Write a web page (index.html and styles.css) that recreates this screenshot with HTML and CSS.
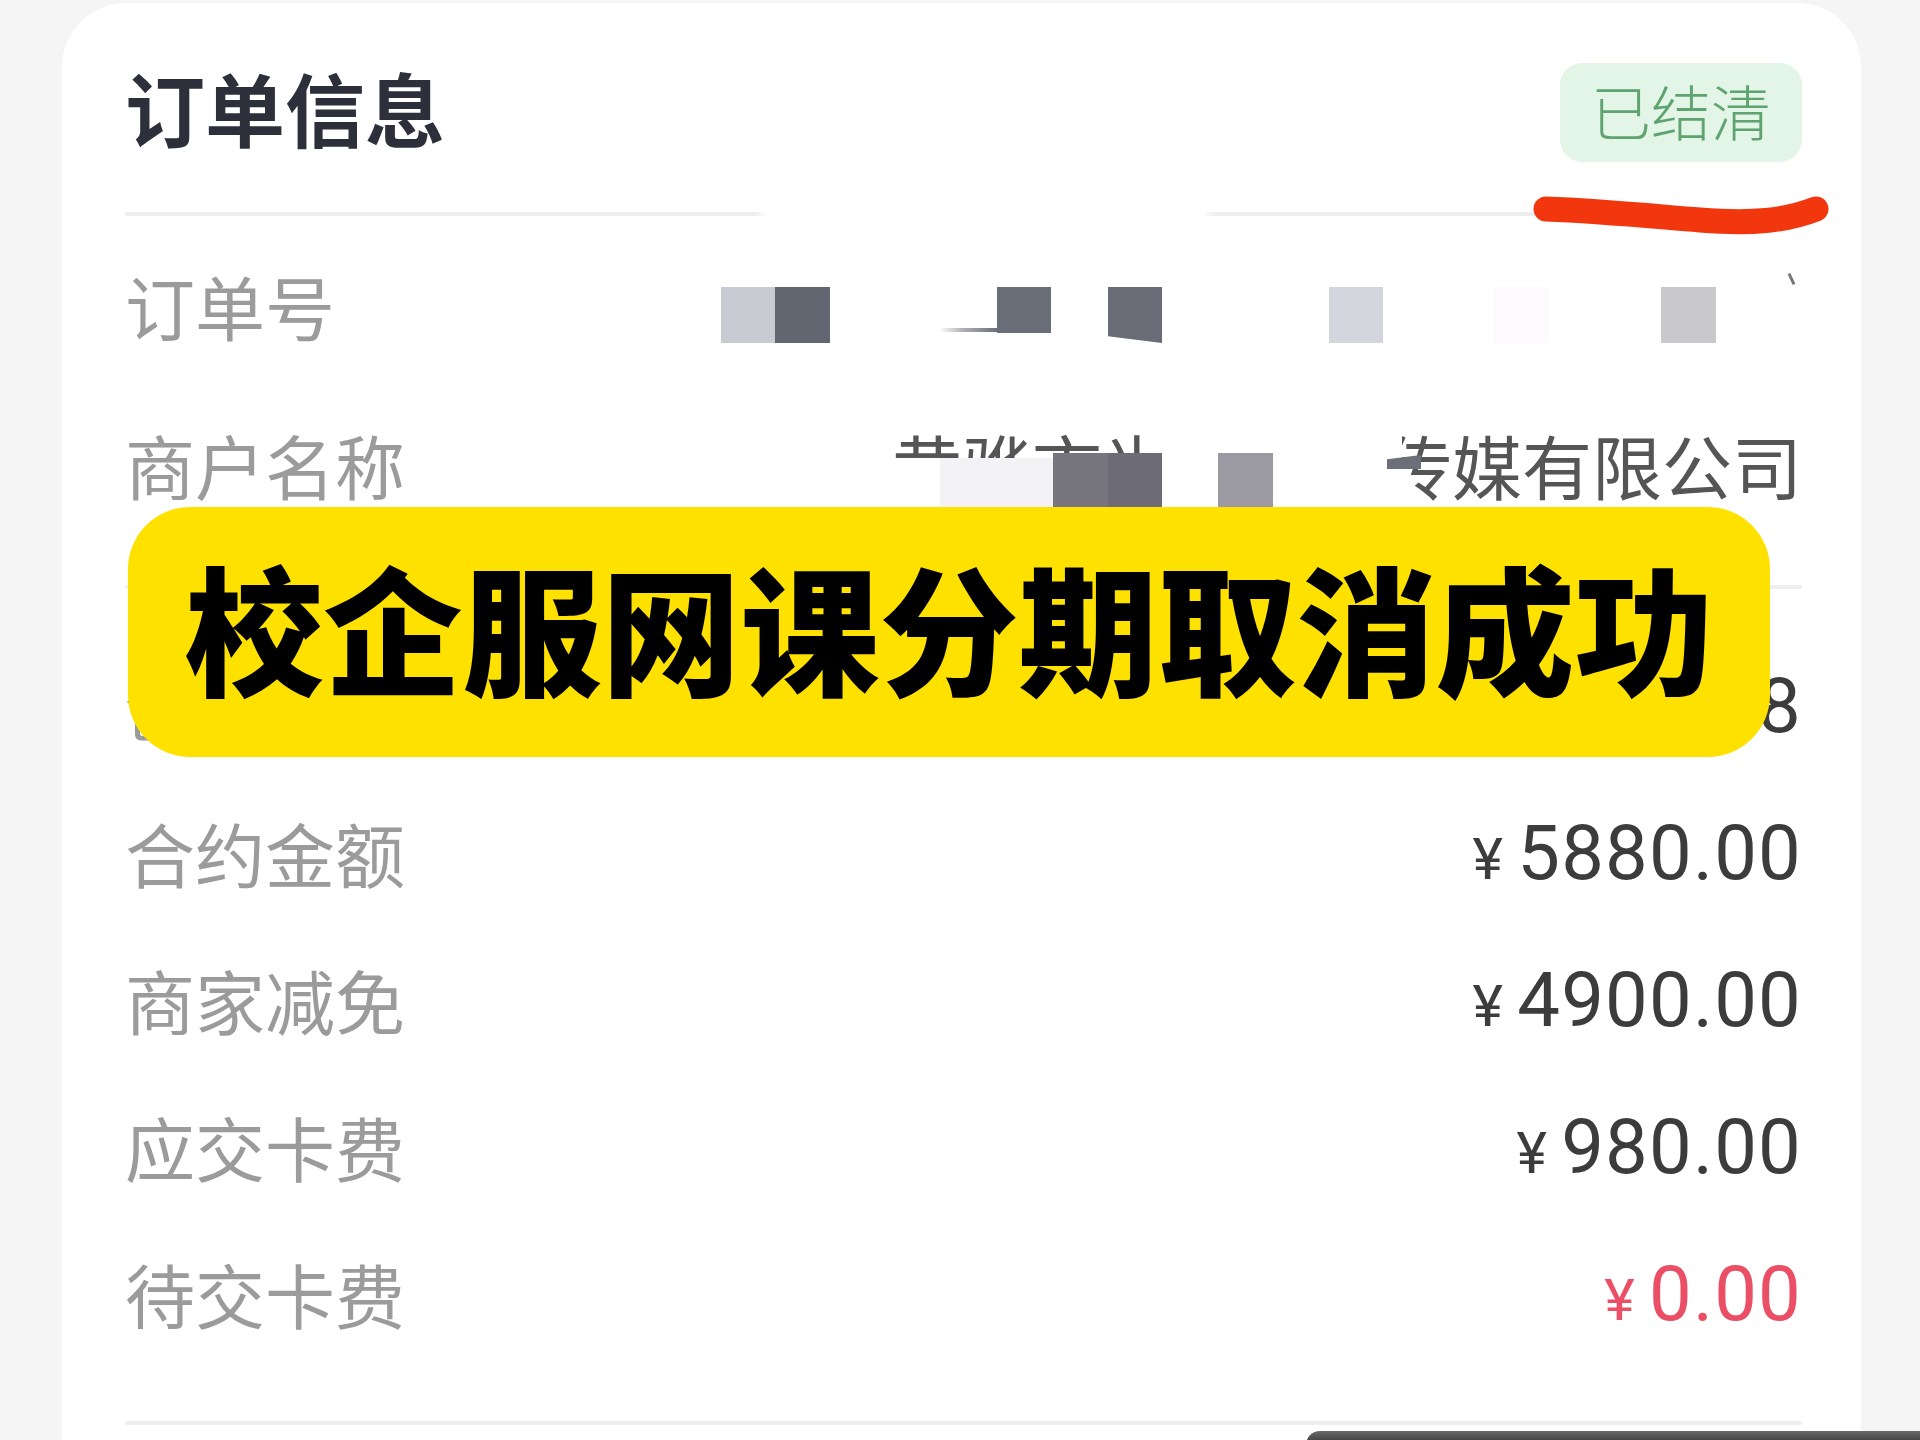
FILE: index.html
```html
<!DOCTYPE html>
<html lang="zh-CN">
<head>
<meta charset="utf-8">
<title>订单信息</title>
<link rel="stylesheet" href="styles.css">
</head>
<body>
<div class="page">
  <section class="card">
    <header class="head">
      <h1 class="title">订单信息</h1>
      <span class="badge">已结清</span>
    </header>
    <div class="divider divider-top"></div>
    <svg class="scribble" width="320" height="50" viewBox="0 0 320 50" aria-hidden="true">
      <path d="M26 19 C80 21 130 26 180 30 C232 34 265 31 296 19" fill="none" stroke="#f2370f" stroke-width="25" stroke-linecap="round"/>
    </svg>

    <div class="group group-a">
      <div class="row">
        <span class="label">订单号</span>
        <span class="value"></span>
        <div class="mosaic">
          <i class="blk o1"></i><i class="blk o2"></i><i class="blk o3"></i><i class="blk o4"></i>
          <i class="blk o5"></i><i class="blk o6"></i><i class="blk o7"></i><i class="blk o8"></i><i class="blk o9"></i>
        </div>
      </div>
      <div class="row">
        <span class="label">商户名称</span>
        <span class="value cn">黄骅市光华文化传媒有限公司</span>
        <div class="mosaic">
          <i class="blk c1"></i><i class="blk c2"></i><i class="blk c3"></i><i class="blk c4"></i>
          <i class="blk c5"></i><i class="blk c6"></i><i class="blk c7"></i>
        </div>
      </div>
    </div>

    <div class="divider"></div>

    <div class="group group-b">
      <div class="row">
        <span class="label">创建时间</span>
        <span class="value">2023-05-16 14:32:08</span>
      </div>
      <div class="row">
        <span class="label">合约金额</span>
        <span class="value"><span class="cur">¥</span>5880.00</span>
      </div>
      <div class="row">
        <span class="label">商家减免</span>
        <span class="value"><span class="cur">¥</span>4900.00</span>
      </div>
      <div class="row">
        <span class="label">应交卡费</span>
        <span class="value"><span class="cur">¥</span>980.00</span>
      </div>
      <div class="row">
        <span class="label">待交卡费</span>
        <span class="value red"><span class="cur">¥</span>0.00</span>
      </div>
    </div>

    <div class="divider"></div>

    <div class="banner">校企服网课分期取消成功</div>
  </section>
  <div class="home-bar"></div>
</div>
</body>
</html>
```

FILE: styles.css
```css
html, body {
  margin: 0;
  padding: 0;
  height: 1440px;
  overflow: hidden;
  background: #f5f5f5;
}

body {
  font-family: "Noto Sans CJK SC", "Noto Sans", sans-serif;
}

.page {
  position: relative;
  height: 1440px;
}

.card {
  position: relative;
  box-sizing: border-box;
  width: 1799px;
  margin: 3px 0 0 62px;
  padding: 60px 59px 15px 63px;
  background: #ffffff;
  border-radius: 64px 64px 0 0;
}

.head {
  display: flex;
  justify-content: space-between;
  align-items: center;
  height: 99px;
}

.title {
  margin: 0;
  padding-bottom: 14px;
  font-size: 80px;
  font-weight: 700;
  line-height: 1;
  color: #2d2f3b;
}

.badge {
  box-sizing: border-box;
  width: 242px;
  height: 99px;
  display: flex;
  align-items: center;
  justify-content: center;
  padding-bottom: 6px;
  background: #e2f5e6;
  border-radius: 22px;
  color: #5ea370;
  font-size: 60px;
  font-weight: 300;
  line-height: 1;
}

.divider {
  height: 4px;
  background: #eeeeee;
  border-radius: 2px;
}

.divider-top {
  margin-top: 50px;
  background: linear-gradient(to right,
    #eeeeee 0, #eeeeee 37.6%, rgba(238,238,238,0) 38.3%,
    rgba(238,238,238,0) 64.3%, #eeeeee 65%, #eeeeee 100%);
}

.scribble {
  position: absolute;
  left: 1458px;
  top: 187px;
}

.group-a {
  display: flex;
  flex-direction: column;
  gap: 12px;
  padding: 16px 0 47px;
}

.group-b {
  padding: 43px 0 54px;
}

.row {
  position: relative;
  height: 147px;
  display: flex;
  align-items: center;
  justify-content: space-between;
}

.label {
  font-size: 70px;
  line-height: 1;
  color: #9b9b9b;
}

.value {
  display: flex;
  align-items: baseline;
  font-family: Roboto, "Noto Sans CJK SC", sans-serif;
  font-size: 76px;
  letter-spacing: 1.2px;
  line-height: 1;
  color: #3c3c3c;
}

.value.cn {
  font-family: "Noto Sans CJK SC", sans-serif;
  font-size: 70px;
  letter-spacing: 0;
  color: #555555;
}

.value.red {
  color: #ea4f66;
}

.cur {
  font-size: 58px;
  margin-right: 13px;
}

/* privacy mosaic overlays */
.mosaic {
  position: absolute;
  inset: 0;
  pointer-events: none;
}

.blk {
  position: absolute;
  display: block;
}

.o1 { left: 596px; top: 55px; width: 54px; height: 56px; background: #cacbd2; }
.o2 { left: 650px; top: 55px; width: 55px; height: 56px; background: #626670; }
.o3 { left: 814px; top: 96px; width: 58px; height: 4px; background: linear-gradient(to right, rgba(176,178,184,0), #b0b2b8 40%, #6a6e78); }
.o4 { left: 872px; top: 55px; width: 54px; height: 46px; background: #6a6e78; }
.o5 { left: 983px; top: 55px; width: 54px; height: 56px; background: #6a6c78; clip-path: polygon(0 0, 100% 0, 100% 100%, 0 88%); }
.o6 { left: 1204px; top: 55px; width: 54px; height: 56px; background: #d4d5dd; }
.o7 { left: 1369px; top: 55px; width: 55px; height: 56px; background: #fcfafd; }
.o8 { left: 1536px; top: 55px; width: 55px; height: 56px; background: #c9c8cc; }
.o9 { left: 1665px; top: 41px; width: 3px; height: 12px; background: #777777; transform: rotate(-25deg); }

.c1 { left: 760px; top: 67px; width: 265px; height: 54px; background: #ffffff; }
.c2 { left: 1025px; top: 34px; width: 252px; height: 87px; background: #ffffff; }
.c3 { left: 815px; top: 67px; width: 113px; height: 54px; background: #f3f3f6; }
.c4 { left: 928px; top: 62px; width: 55px; height: 54px; background: #77767f; }
.c5 { left: 983px; top: 62px; width: 54px; height: 54px; background: #6c6b76; }
.c6 { left: 1093px; top: 62px; width: 55px; height: 54px; background: #9b9aa3; }
.c7 { left: 1262px; top: 64px; width: 34px; height: 14px; background: #6d6e78; clip-path: polygon(0 30%, 100% 0, 100% 100%, 0 100%); }

/* yellow caption overlay */
.banner {
  position: absolute;
  left: 66px;
  top: 504px;
  width: 1642px;
  height: 250px;
  box-sizing: border-box;
  padding-bottom: 15px;
  display: flex;
  align-items: center;
  justify-content: center;
  background: #ffe100;
  border-radius: 62px;
  color: #000000;
  font-size: 139px;
  font-weight: 900;
  line-height: 1;
  white-space: nowrap;
}

.home-bar {
  position: absolute;
  left: 1306px;
  top: 1428px;
  width: 614px;
  height: 20px;
  background: linear-gradient(to bottom, #6a6a6a, #4a4a4a 40%);
  border-top-left-radius: 14px;
}
```
